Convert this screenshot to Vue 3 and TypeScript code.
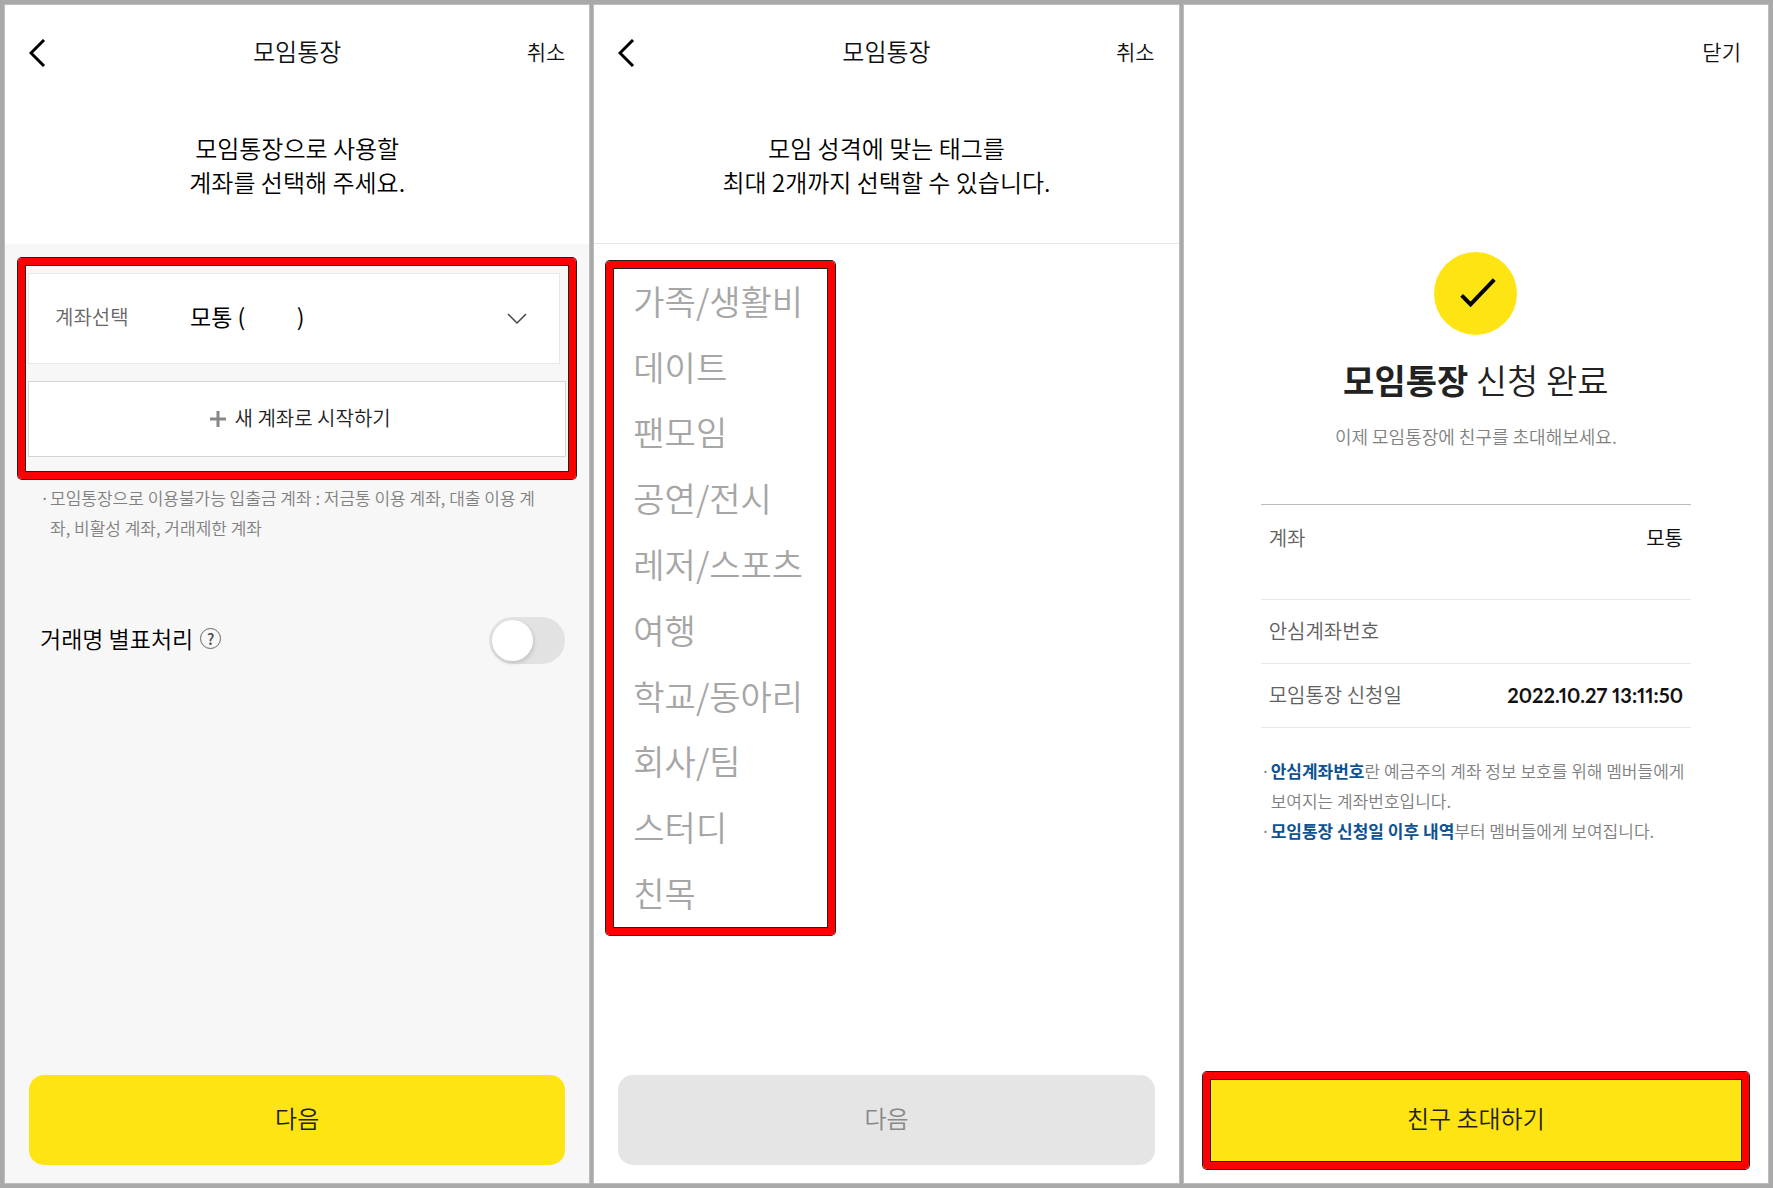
<script setup lang="ts">
import { ref } from 'vue'

const tags: string[] = [
  '가족/생활비',
  '데이트',
  '팬모임',
  '공연/전시',
  '레저/스포츠',
  '여행',
  '학교/동아리',
  '회사/팀',
  '스터디',
  '친목',
]

const MAX_TAGS = 2
const selected = ref<string[]>([])
const maskName = ref(false)
const accountName = '모통 (' + '\u00a0'.repeat(10) + ')'

function toggleTag(tag: string): void {
  if (selected.value.includes(tag)) {
    selected.value = selected.value.filter((t) => t !== tag)
  } else if (selected.value.length < MAX_TAGS) {
    selected.value = [...selected.value, tag]
  }
}
</script>

<template>
  <main class="board">
    <section class="screen">
      <header class="bar">
        <button class="back" type="button" aria-label="뒤로">
          <svg width="17" height="28" viewBox="0 0 17 28"><path d="M15 1 2 14l13 13" /></svg>
        </button>
        <h1 class="bar-title">모임통장</h1>
        <button class="bar-action" type="button">취소</button>
      </header>
      <h2 class="lead">모임통장으로 사용할<br />계좌를 선택해 주세요.</h2>
      <div class="body muted">
        <div class="frame account-frame">
          <div class="account">
            <label class="account-label" for="account">계좌선택</label>
            <select id="account" class="account-select">
              <option>{{ accountName }}</option>
            </select>
            <svg class="chevron" width="20" height="12" viewBox="0 0 20 12"><path d="m1 1 9 9 9-9" /></svg>
          </div>
          <button class="new-account" type="button">
            <svg width="16" height="16" viewBox="0 0 16 16"><path d="M8 0v16M0 8h16" /></svg>
            새 계좌로 시작하기
          </button>
        </div>
        <ul class="notes account-notes">
          <li>모임통장으로 이용불가능 입출금 계좌 : 저금통 이용 계좌, 대출 이용 계좌, 비활성 계좌, 거래제한 계좌</li>
        </ul>
        <div class="mask">
          <label for="mask">거래명 별표처리</label>
          <button class="help" type="button">?</button>
          <input id="mask" v-model="maskName" class="switch" type="checkbox" role="switch" />
        </div>
        <button class="cta" type="button">다음</button>
      </div>
    </section>

    <section class="screen">
      <header class="bar">
        <button class="back" type="button" aria-label="뒤로">
          <svg width="17" height="28" viewBox="0 0 17 28"><path d="M15 1 2 14l13 13" /></svg>
        </button>
        <h1 class="bar-title">모임통장</h1>
        <button class="bar-action" type="button">취소</button>
      </header>
      <h2 class="lead">모임 성격에 맞는 태그를<br />최대 2개까지 선택할 수 있습니다.</h2>
      <div class="body ruled">
        <div class="frame tag-frame">
          <button
            v-for="tag in tags"
            :key="tag"
            class="tag"
            :class="{ on: selected.includes(tag) }"
            type="button"
            :aria-pressed="selected.includes(tag)"
            @click="toggleTag(tag)"
          >
            {{ tag }}
          </button>
        </div>
        <button class="cta" type="button" :disabled="selected.length === 0">다음</button>
      </div>
    </section>

    <section class="screen">
      <header class="bar bar-close">
        <button class="bar-action" type="button">닫기</button>
      </header>
      <div class="done">
        <svg class="badge" width="83" height="83" viewBox="0 0 84 84">
          <circle cx="42" cy="42" r="42" />
          <path d="m28 44 9 9 24-25" />
        </svg>
        <h1 class="done-title"><strong>모임통장</strong> 신청 완료</h1>
        <p class="done-sub">이제 모임통장에 친구를 초대해보세요.</p>
        <table class="summary">
          <tbody>
            <tr class="tall"><th scope="row">계좌</th><td>모통</td></tr>
            <tr><th scope="row">안심계좌번호</th><td></td></tr>
            <tr><th scope="row">모임통장 신청일</th><td class="date">2022.10.27 13:11:50</td></tr>
          </tbody>
        </table>
        <ul class="notes">
          <li><strong>안심계좌번호</strong>란 예금주의 계좌 정보 보호를 위해 멤버들에게 보여지는 계좌번호입니다.</li>
          <li><strong>모임통장 신청일 이후 내역</strong>부터 멤버들에게 보여집니다.</li>
        </ul>
      </div>
      <div class="frame invite-frame">
        <button class="invite" type="button">친구 초대하기</button>
      </div>
    </section>
  </main>
</template>

<style>
body {
  margin: 0;
}
</style>

<style scoped>
.board {
  box-sizing: border-box;
  min-height: 100vh;
  padding: 5px;
  display: grid;
  grid-template-columns: repeat(3, minmax(0, 1fr));
  gap: 5px;
  background: #a9a9a9;
  color: #111;
  font-family: 'Noto Sans CJK KR', 'Noto Sans', sans-serif;
  font-weight: 350;
}
.screen {
  display: flex;
  flex-direction: column;
  background: #fff;
  box-shadow: 0 0 0 1px #bdbdbd;
}
h1,
h2,
p,
ul {
  margin: 0;
  padding: 0;
  font-weight: inherit;
}
button,
select {
  margin: 0;
  padding: 0;
  border: 0;
  background: none;
  color: inherit;
  font: inherit;
  cursor: pointer;
}
strong {
  font-weight: 700;
}
svg {
  display: block;
  fill: none;
}

/* top bar */
.bar {
  height: 96px;
  padding: 0 24px;
  display: grid;
  grid-template-columns: 1fr auto 1fr;
  align-items: center;
}
.back {
  justify-self: start;
}
.back path {
  stroke: #000;
  stroke-width: 3;
}
.bar-title {
  padding-bottom: 4px;
  font-size: 24px;
  line-height: 34px;
}
.bar-action {
  grid-column: 3;
  justify-self: end;
  padding-bottom: 4px;
  font-size: 21px;
  line-height: 30px;
}
.bar-close {
  padding: 0 27px;
}
.lead {
  padding: 30px 24px 45px;
  color: #000;
  font-size: 24px;
  line-height: 34px;
  text-align: center;
}
.body {
  flex: 1;
  display: flex;
  flex-direction: column;
}
.muted {
  background: #f7f7f7;
}
.ruled {
  box-shadow: 0 -1px #e8e8e8;
}

/* red highlight */
.frame {
  padding: 1px;
  border: 7px solid #f00;
  border-radius: 4px;
  box-shadow: 0 0 0 1px #222, inset 0 0 0 1px #222;
}

/* account */
.account-frame {
  margin: 14px 13px 0;
  padding: 8px 3px 15px;
  display: flex;
  flex-direction: column;
  gap: 17px;
}
.account {
  box-sizing: border-box;
  height: 91px;
  margin-right: 6px;
  padding: 0 32px 0 26px;
  display: grid;
  grid-template-columns: 135px 1fr 20px;
  align-items: center;
  border: 1px solid #e8e8e8;
  background: #fff;
}
.account-label {
  padding-bottom: 4px;
  color: #666;
  font-size: 20px;
}
.account-select {
  grid-area: 1 / 2 / 2 / 4;
  appearance: none;
  padding-bottom: 6px;
  color: #000;
  font-size: 23px;
  font-weight: 400;
  line-height: 34px;
}
.chevron {
  grid-area: 1 / 3;
  pointer-events: none;
}
.chevron path {
  stroke: #444;
  stroke-width: 1.5;
}
.new-account {
  box-sizing: border-box;
  height: 76px;
  padding: 0 0 4px 6px;
  display: flex;
  align-items: center;
  justify-content: center;
  gap: 9px;
  border: 1px solid #d4d4d4;
  background: #fff;
  color: #222;
  font-size: 20px;
}
.new-account svg {
  margin-top: 4px;
}
.new-account path {
  stroke: #888;
  stroke-width: 3;
}

.notes {
  list-style: none;
  color: #808080;
  font-size: 17px;
  line-height: 30px;
}
.notes li {
  padding-left: 10px;
}
.notes li::before {
  content: '·';
  display: inline-block;
  width: 10px;
  margin-left: -10px;
}
.notes strong {
  color: #0d5291;
}
.account-notes {
  margin: 4px 38px 0 35px;
}

.mask {
  margin: 74px 24px 0 35px;
  display: flex;
  align-items: center;
  gap: 7px;
  color: #000;
  font-size: 23px;
  line-height: 34px;
}
.mask label {
  margin-bottom: 6px;
}
.help {
  box-sizing: border-box;
  width: 21px;
  height: 21px;
  margin-bottom: 4px;
  border: 1px solid #666;
  border-radius: 50%;
  color: #444;
  font-size: 15px;
  font-weight: 500;
  line-height: 19px;
}
.switch {
  appearance: none;
  box-sizing: border-box;
  width: 76px;
  height: 47px;
  margin: 0 0 0 auto;
  padding: 3px;
  border-radius: 24px;
  background: #e2e2e2;
}
.switch::before {
  content: '';
  display: block;
  width: 41px;
  height: 41px;
  border-radius: 50%;
  background: #fff;
  box-shadow: 1px 2px 4px rgba(0, 0, 0, 0.15);
}
.switch:checked {
  background: #ffe414;
}
.switch:checked::before {
  margin-left: auto;
}

.cta,
.invite {
  padding-bottom: 6px;
  background: #ffe414;
  color: #1e1e1e;
  font-size: 24px;
}
.cta {
  height: 90px;
  margin: auto 24px 18px;
  border-radius: 15px;
}
.cta:disabled {
  background: #e5e5e5;
  color: #888;
}

/* tags */
.tag-frame {
  align-self: flex-start;
  box-sizing: border-box;
  width: 229px;
  min-height: 674px;
  margin: 17px 12px 24px;
  padding-left: 20px;
  display: grid;
  grid-auto-rows: 1fr;
}
.tag {
  padding-bottom: 2px;
  color: #a6a6a6;
  font-size: 34px;
  line-height: 48px;
  text-align: left;
}
.tag.on {
  color: #111;
}

/* completion */
.done {
  flex: 1;
  padding: 151px 77px 24px;
  display: flex;
  flex-direction: column;
}
.badge {
  align-self: center;
}
.badge circle {
  fill: #ffe414;
}
.badge path {
  stroke: #000;
  stroke-width: 4;
}
.done-title {
  margin-top: 20px;
  color: #222;
  font-size: 34px;
  line-height: 50px;
  text-align: center;
}
.done-sub {
  margin-top: 16px;
  color: #808080;
  font-size: 18px;
  line-height: 30px;
  text-align: center;
}
.summary {
  width: 100%;
  margin: 53px 0 28px;
  border-collapse: collapse;
  border-top: 1px solid #bbb;
  font-size: 20px;
  line-height: 30px;
}
.summary tr {
  height: 64px;
  border-bottom: 1px solid #e8e8e8;
}
.summary .tall {
  height: 95px;
  vertical-align: top;
}
.summary th,
.summary td {
  padding: 0 8px 2px;
}
.summary .tall > * {
  padding-top: 18px;
}
.summary th {
  color: #606060;
  font-weight: inherit;
  text-align: left;
}
.summary td {
  font-weight: 400;
  text-align: right;
}
.summary .date {
  font-family: Lato, 'Noto Sans CJK KR', sans-serif;
  font-weight: 700;
  font-variant-numeric: proportional-nums;
}
.invite-frame {
  margin: 0 19px 14px;
  display: flex;
}
.invite {
  flex: 1;
  height: 81px;
}
</style>
